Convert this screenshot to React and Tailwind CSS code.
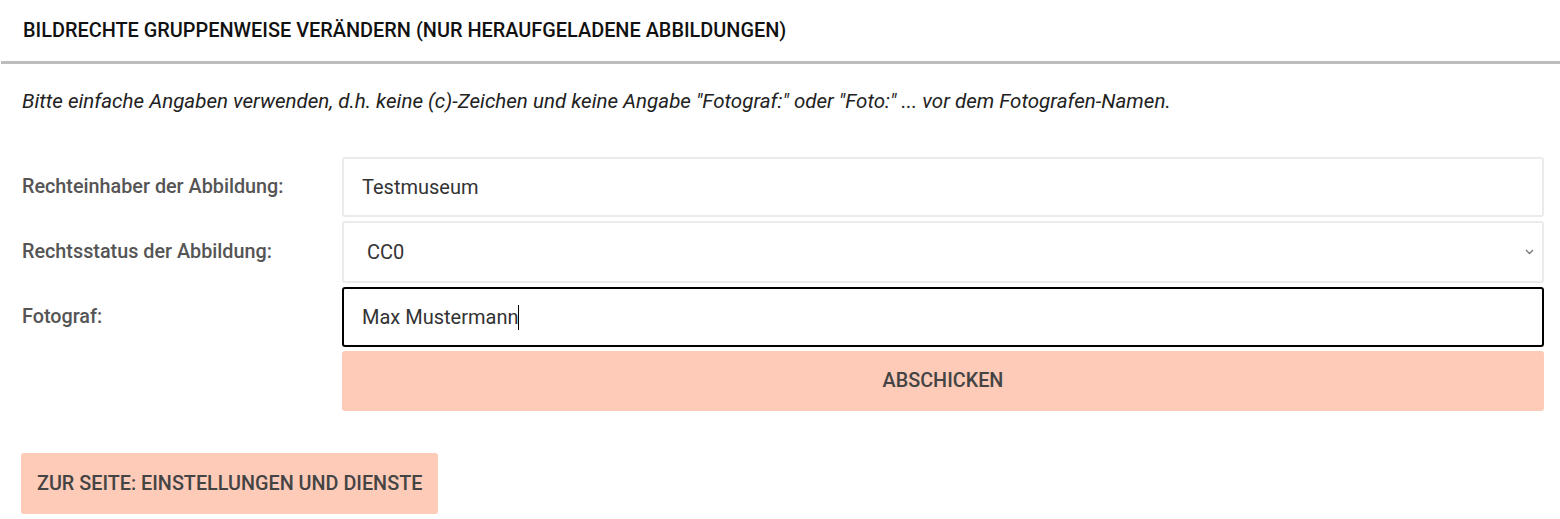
import React from 'react';

const font = { fontFamily: 'Roboto, "Liberation Sans", sans-serif' };

const Field = ({ label, children }) => (
  <div className="flex items-center">
    <label className="w-[320px] shrink-0 text-[19.8px] font-medium text-[#555]">{label}</label>
    <div className="flex-1">{children}</div>
  </div>
);

export default function App() {
  return (
    <div className="w-[1560px] h-[519px] bg-white overflow-hidden" style={font}>
      <div className="h-[64px] flex items-center px-[22px] border-b-[3px] border-[#bdbdbd] ml-px">
        <h2 className="text-[19.9px] font-medium text-[#111] uppercase">
          Bildrechte gruppenweise verändern (nur heraufgeladene Abbildungen)
        </h2>
      </div>

      <p className="px-[22px] mt-[23px] text-[20.55px] italic text-[#222] leading-[28px]">
        Bitte einfache Angaben verwenden, d.h. keine (c)-Zeichen und keine Angabe "Fotograf:" oder "Foto:" ... vor dem Fotografen-Namen.
      </p>

      <form className="pl-[22px] pr-[16px] mt-[42px] flex flex-col gap-[4px]">
        <Field label="Rechteinhaber der Abbildung:">
          <input
            readOnly
            value="Testmuseum"
            className="w-full h-[60px] px-[18px] border-2 border-[#ebebeb] rounded-[3px] text-[20px] text-[#333] outline-none"
          />
        </Field>
        <Field label="Rechtsstatus der Abbildung:">
          <div className="relative">
            <select
              defaultValue="CC0"
              className="appearance-none w-full h-[62px] pl-[23px] pr-8 border-2 border-[#ebebeb] rounded-[3px] text-[20px] text-[#333] bg-white outline-none"
            >
              <option>CC0</option>
              <option>CC BY</option>
              <option>CC BY-SA</option>
            </select>
            <svg className="absolute right-[10px] top-1/2 -translate-y-1/2 pointer-events-none" width="9" height="6" viewBox="0 0 9 6">
              <path d="M1 1l3.5 3.5L8 1" fill="none" stroke="#777" strokeWidth="1.3" />
            </svg>
          </div>
        </Field>
        <Field label="Fotograf:">
          <div className="w-full h-[60px] px-[18px] border-2 border-black rounded-[3px] text-[20px] text-[#333] flex items-center">
            Max Mustermann<span className="inline-block w-px h-[25px] bg-black" />
          </div>
        </Field>
        <div className="flex">
          <div className="w-[320px] shrink-0" />
          <button
            type="button"
            className="flex-1 h-[60px] bg-[#fecbb9] rounded-[3px] text-[19.8px] font-medium text-[#444] uppercase"
          >
            Abschicken
          </button>
        </div>
      </form>

      <div className="pl-[21px] mt-[42px]">
        <button
          type="button"
          className="h-[61px] px-[16px] bg-[#fecbb9] rounded-[3px] text-[19.8px] font-medium text-[#444] uppercase"
        >
          Zur Seite: Einstellungen und Dienste
        </button>
      </div>
    </div>
  );
}
